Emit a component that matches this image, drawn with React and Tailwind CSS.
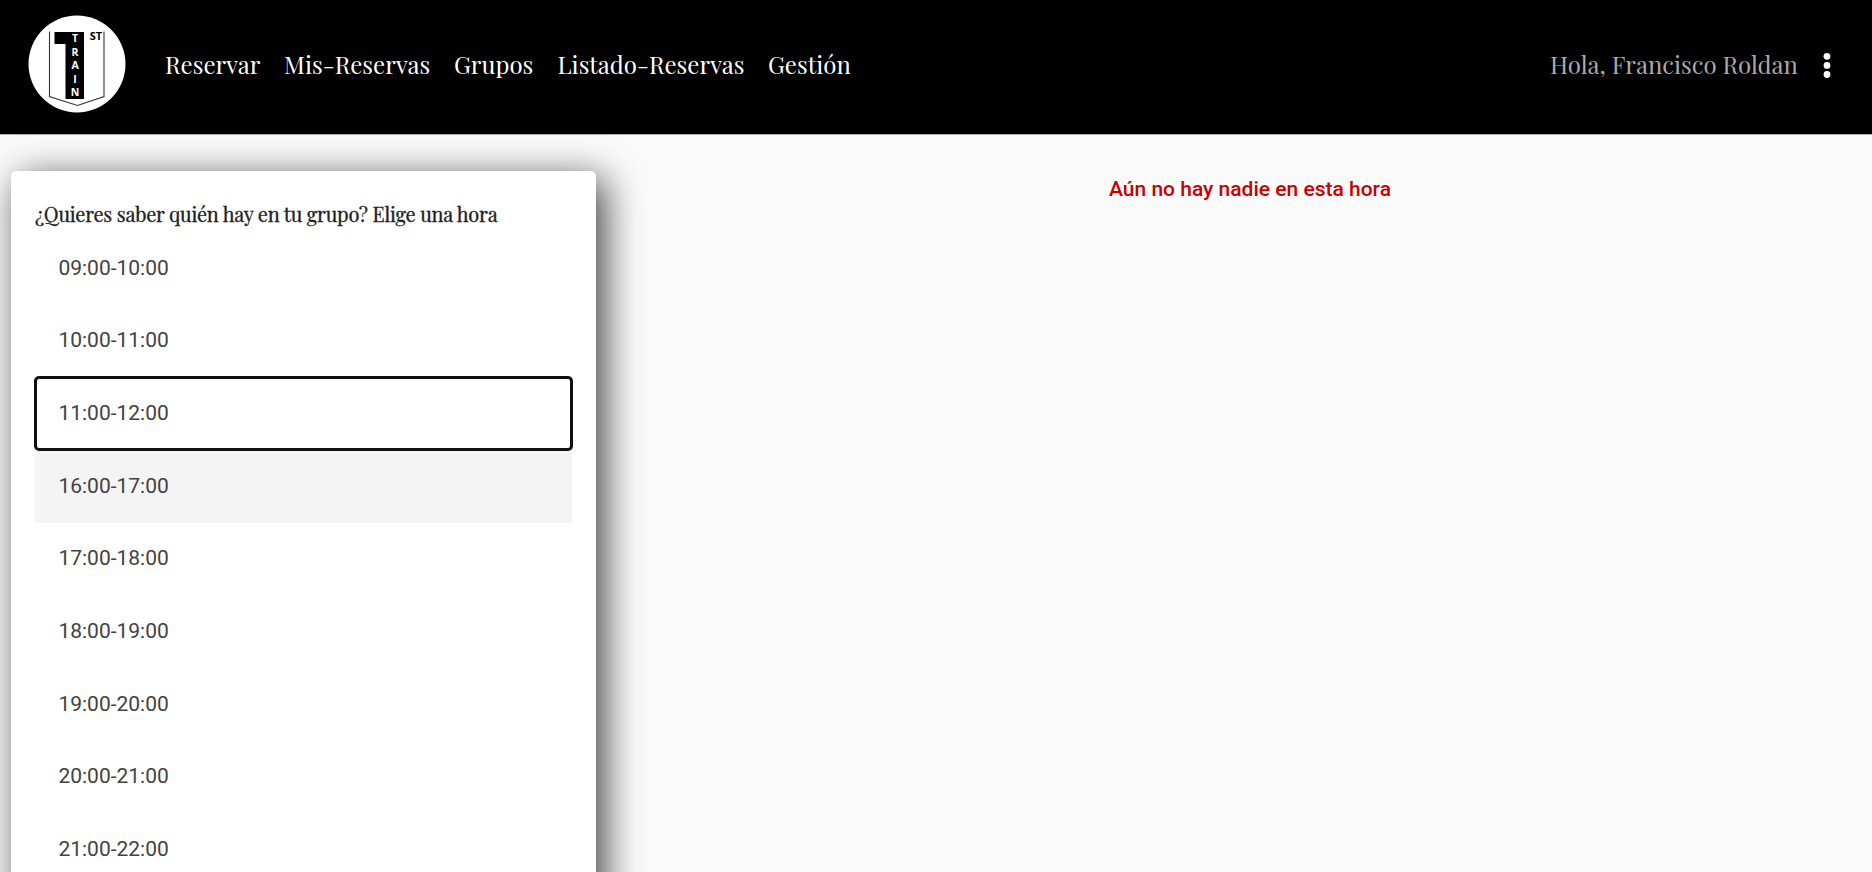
const links = [
  { label: "Reservar", box: "w-[95px]" },
  { label: "Mis-Reservas", box: "w-[146px]" },
  { label: "Grupos", box: "w-[79.5px]" },
  { label: "Listado-Reservas", box: "w-[186.5px]" },
  { label: "Gestión", box: "w-[83px]" },
];

const hours = [
  "09:00-10:00",
  "10:00-11:00",
  "11:00-12:00",
  "16:00-17:00",
  "17:00-18:00",
  "18:00-19:00",
  "19:00-20:00",
  "20:00-21:00",
  "21:00-22:00",
];

const serif = "font-['Playfair_Display','Liberation_Serif',serif]";

function Logo() {
  return (
    <svg className="size-[98px] shrink-0" viewBox="0 0 98 98">
      <circle cx="49" cy="49" r="48.5" fill="#fff" />
      <path d="M21.5 16.5V81.5L49.5 90.5L76 81.5V16.5" fill="none" stroke="#333" strokeWidth="1.1" />
      <path d="M26.5 17H56V84H37.5V29H26.5Z" fill="#000" />
      <g fontFamily="'Open Sans', sans-serif" fontWeight="700" textAnchor="middle">
        <g fill="#fff" fontSize="10.5">
          <text x="47" y="27">T</text>
          <text x="47" y="40.5">R</text>
          <text x="47" y="54">A</text>
          <text x="47" y="67.5">I</text>
          <text x="47" y="80.8">N</text>
        </g>
        <text x="68" y="25.3" fontSize="11" fill="#000">ST</text>
      </g>
    </svg>
  );
}

export default function App() {
  return (
    <div className="flex h-[872px] flex-col overflow-hidden bg-[#fafafa] font-[Roboto,sans-serif]">
      <header className="flex h-[135px] shrink-0 items-start border-b border-[#aaa] bg-black pl-7 pt-[15px]">
        <Logo />
        <nav className={`ml-[39px] flex h-[98px] items-center gap-6 text-[24px] text-white ${serif}`}>
          {links.map((l) => (
            <a key={l.label} className={`whitespace-nowrap ${l.box}`}>
              {l.label}
            </a>
          ))}
        </nav>
        <div className={`ml-auto flex h-[98px] items-center ${serif}`}>
          <span className="w-[247px] whitespace-nowrap text-[24px] text-[#aaa]">Hola, Francisco Roldan</span>
          <svg className="ml-[26px] mr-[41px] h-[30px] w-2" viewBox="0 0 8 30" fill="#fff">
            <circle cx="4" cy="7.3" r="3.4" />
            <circle cx="4" cy="16.4" r="3.4" />
            <circle cx="4" cy="25.5" r="3.4" />
          </svg>
        </div>
      </header>
      <main className="flex grow items-start">
        <section className="ml-[11px] mt-[36px] h-[780px] w-[585px] shrink-0 rounded-[5px] bg-white px-6 pt-[26px] shadow-[8px_8px_38px_rgba(0,0,0,0.75)]">
          <h2 className={`h-[35px] whitespace-nowrap text-[20px] leading-[34px] tracking-[-0.25px] text-[#212121] [-webkit-text-stroke:0.3px_#212121] ${serif}`}>
            ¿Quieres saber quién hay en tu grupo? Elige una hora
          </h2>
          <ul className="text-[21px] text-[#424242]">
            {hours.map((h, i) => (
              <li
                key={h}
                className={
                  "flex h-[72.7px] items-center pl-[23.4px] " +
                  (i === 2
                    ? "relative rounded-[4px] outline-[3px] -outline-offset-2 outline-[#101010]"
                    : i === 3
                      ? "bg-[#f4f4f4]"
                      : "")
                }
              >
                {h}
              </li>
            ))}
          </ul>
        </section>
        <p className="ml-[32px] mt-[39px] grow text-center text-[21px] font-medium leading-[30px] text-[#c90000]">
          Aún no hay nadie en esta hora
        </p>
      </main>
    </div>
  );
}
